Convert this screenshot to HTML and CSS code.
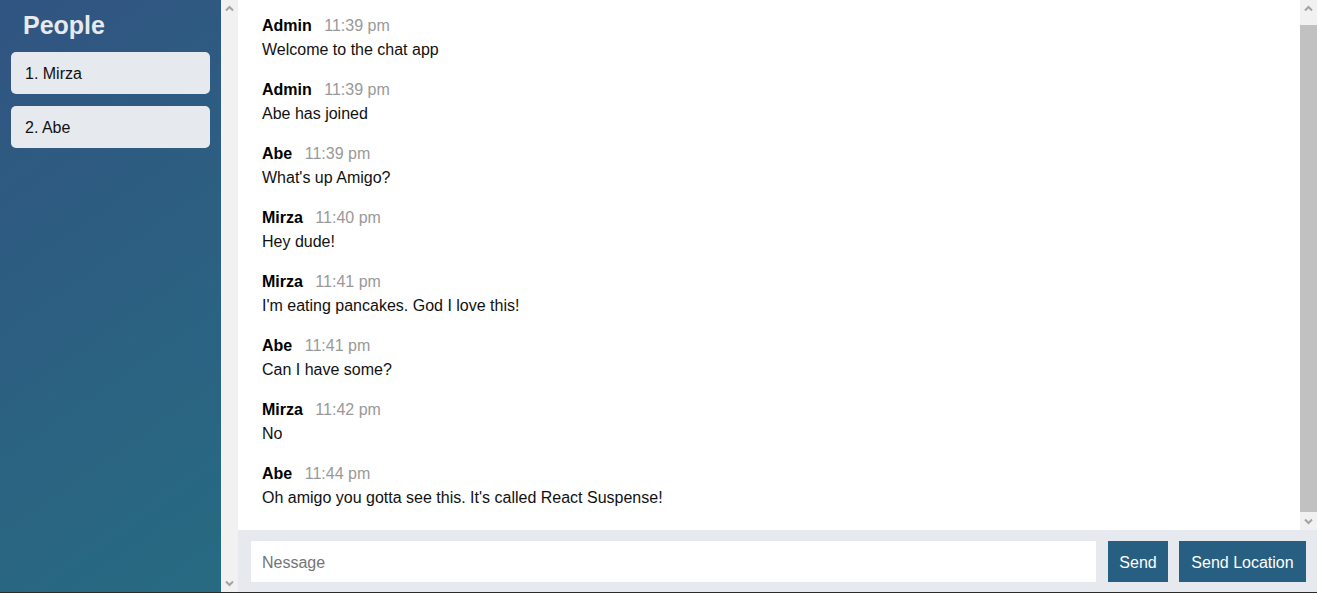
FILE: index.html
```html
<!DOCTYPE html>
<html lang="en">
<head>
<meta charset="utf-8">
<title>Chat App</title>
<link rel="stylesheet" href="styles.css">
</head>
<body>
<div class="chat">
  <aside class="sidebar">
    <div class="sidebar__content">
      <h2 class="sidebar__title">People</h2>
      <ul class="people">
        <li class="people__item">1. Mirza</li>
        <li class="people__item">2. Abe</li>
      </ul>
    </div>
    <div class="scrollbar">
      <span class="scrollbar__btn"><svg width="17" height="17" viewBox="0 0 17 17"><polyline points="5,10.5 8.5,7 12,10.5" fill="none" stroke="#a3a3a3" stroke-width="2"/></svg></span>
      <span class="scrollbar__track"></span>
      <span class="scrollbar__btn"><svg width="17" height="17" viewBox="0 0 17 17"><polyline points="5,6.5 8.5,10 12,6.5" fill="none" stroke="#a3a3a3" stroke-width="2"/></svg></span>
    </div>
  </aside>
  <main class="chat__main">
    <div class="messages-pane">
      <div class="messages">
        <div class="message">
          <p><span class="message__name">Admin</span> <span class="message__time">11:39 pm</span></p>
          <p>Welcome to the chat app</p>
        </div>
        <div class="message">
          <p><span class="message__name">Admin</span> <span class="message__time">11:39 pm</span></p>
          <p>Abe has joined</p>
        </div>
        <div class="message">
          <p><span class="message__name">Abe</span> <span class="message__time">11:39 pm</span></p>
          <p>What's up Amigo?</p>
        </div>
        <div class="message">
          <p><span class="message__name">Mirza</span> <span class="message__time">11:40 pm</span></p>
          <p>Hey dude!</p>
        </div>
        <div class="message">
          <p><span class="message__name">Mirza</span> <span class="message__time">11:41 pm</span></p>
          <p>I'm eating pancakes. God I love this!</p>
        </div>
        <div class="message">
          <p><span class="message__name">Abe</span> <span class="message__time">11:41 pm</span></p>
          <p>Can I have some?</p>
        </div>
        <div class="message">
          <p><span class="message__name">Mirza</span> <span class="message__time">11:42 pm</span></p>
          <p>No</p>
        </div>
        <div class="message">
          <p><span class="message__name">Abe</span> <span class="message__time">11:44 pm</span></p>
          <p>Oh amigo you gotta see this. It's called React Suspense!</p>
        </div>
      </div>
      <div class="scrollbar">
        <span class="scrollbar__btn"><svg width="17" height="17" viewBox="0 0 17 17"><polyline points="5,10.5 8.5,7 12,10.5" fill="none" stroke="#a3a3a3" stroke-width="2"/></svg></span>
        <span class="scrollbar__track scrollbar__track--active"><span class="scrollbar__thumb"></span></span>
        <span class="scrollbar__btn"><svg width="17" height="17" viewBox="0 0 17 17"><polyline points="5,6.5 8.5,10 12,6.5" fill="none" stroke="#a3a3a3" stroke-width="2"/></svg></span>
      </div>
    </div>
    <form class="compose">
      <input class="compose__input" type="text" placeholder="Nessage">
      <button class="btn btn--send" type="button">Send</button>
      <button class="btn btn--location" type="button">Send Location</button>
    </form>
  </main>
</div>
</body>
</html>
```
FILE: styles.css
```css
* {
  box-sizing: border-box;
}

html, body {
  margin: 0;
  padding: 0;
  height: 100%;
}

body {
  background: #2a2a2a;
  font-family: "Liberation Sans", Arial, sans-serif;
  font-size: 16px;
  color: #111;
}

.chat {
  display: flex;
  height: calc(100vh - 1px);
}

/* fake classic scrollbars */
.scrollbar {
  flex: 0 0 17px;
  width: 17px;
  display: flex;
  flex-direction: column;
  background: #f1f1f1;
}

.scrollbar__btn {
  flex: 0 0 17px;
  height: 17px;
  display: block;
}

.scrollbar__btn svg {
  display: block;
}

.scrollbar__track {
  flex: 1;
  display: flex;
  flex-direction: column;
}

.scrollbar__track--active {
  padding: 8px 0 1px;
}

.scrollbar__thumb {
  flex: 1;
  background: #c1c1c1;
}

/* sidebar */
.sidebar {
  flex: 0 0 238px;
  display: flex;
  height: 100%;
}

.sidebar__content {
  flex: 1;
  padding: 10px 11px 0;
  background: linear-gradient(325deg, rgb(39, 107, 130) 0%, rgb(49, 84, 129) 100%);
}

.sidebar__title {
  margin: 0 0 12px 12px;
  font-size: 25px;
  line-height: 30px;
  font-weight: 700;
  color: #e6eaee;
}

.people {
  list-style: none;
  margin: 0;
  padding: 0;
  display: flex;
  flex-direction: column;
  gap: 12px;
}

.people__item {
  background: #e6e9ed;
  border-radius: 5px;
  padding: 13px 14px 11px;
  line-height: 18px;
  color: #111;
}

/* main */
.chat__main {
  flex: 1;
  min-width: 0;
  display: flex;
  flex-direction: column;
  height: 100%;
  background: #fff;
}

.messages-pane {
  flex: 1;
  min-height: 0;
  display: flex;
}

.messages {
  flex: 1;
  min-width: 0;
  overflow: hidden;
  padding: 14px 24px 0;
}

.message {
  margin-bottom: 16px;
}

.message p {
  margin: 0;
  line-height: 24px;
}

.message__name {
  font-weight: 700;
  color: #000;
  margin-right: 8px;
}

.message__time {
  color: #999;
}

/* compose */
.compose {
  flex: 0 0 62px;
  display: flex;
  align-items: stretch;
  gap: 12px;
  margin: 0;
  padding: 11px 11px 10px 13px;
  background: #e6e9ed;
}

.compose__input {
  flex: 1;
  min-width: 0;
  border: none;
  outline: none;
  padding: 2px 11px 0;
  font-family: "Liberation Sans", Arial, sans-serif;
  font-size: 16px;
  background: #fff;
  color: #111;
}

.compose__input::placeholder {
  color: #757575;
}

.btn {
  border: none;
  padding: 2px 0 0;
  background: #275f82;
  color: #fff;
  font-family: "Liberation Sans", Arial, sans-serif;
  font-size: 16px;
  cursor: pointer;
}

.btn--send {
  width: 60px;
}

.btn--location {
  width: 127px;
  margin-left: -1px;
}
```
